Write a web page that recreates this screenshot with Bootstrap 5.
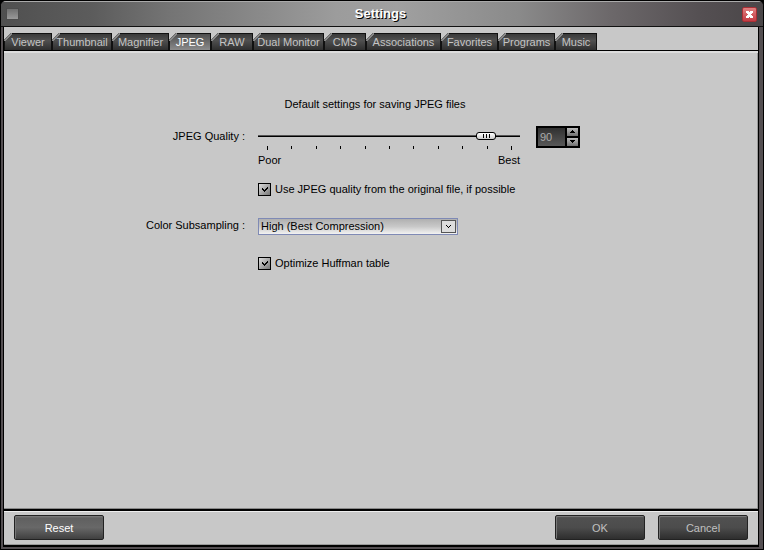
<!DOCTYPE html>
<html lang="en">
<head>
<meta charset="utf-8">
<meta name="viewport" content="width=device-width, initial-scale=1">
<title>Settings</title>
<link href="https://cdn.jsdelivr.net/npm/bootstrap@5.3.0/dist/css/bootstrap.min.css" rel="stylesheet">
<style>
body{background:#000;font:11px/14px "Liberation Sans",Arial,sans-serif;color:#000}
button,input,select{font:inherit}
.window{border:1px solid #000;border-radius:6px 6px 0 0;overflow:hidden;background:#544f52}
.titlebar{height:26px;padding:0 6px 0 5px;border-top:1px solid #aaa;border-bottom:1px solid #111;background:linear-gradient(90deg,#505050,#5c5c5c 12%,#747474 22%,#9c9c9c 44%,#a0a0a0 52%,#8a8a8a 68%,#6c686a 80%,#544f52 92%,#4a4648)}
.titlebar h1{font-size:13px;line-height:16px;font-weight:700;color:#fff;text-shadow:1px 1px 0 #000}
.sysmenu{width:13px;height:12px;border:1px solid #4d4d4d;background:linear-gradient(#707070,#999)}
.closer{width:15px;height:15px;border:1px solid #a82f35;border-radius:2px;background:linear-gradient(#e08080,#c43c44)}
.closer svg{display:block}
.inner{margin:0 4px 2px 2px;border:solid #000;border-width:0 1px 2px 1px;background:#c8c8c8}
.tabs{padding-top:6px}
.tab{height:17px;width:57px;color:#c4c4c4;background:#111;border:0;padding:0;line-height:16px;clip-path:polygon(7px 0,100% 0,100% 100%,0 100%,0 7px);position:relative;z-index:0}
.tab::before{content:"";position:absolute;z-index:-1;inset:1px 1px 0 1px;background:linear-gradient(#3a3a3a,#505050 40%,#2e2e2e);clip-path:polygon(7px 0,100% 0,100% 100%,0 100%,0 7px)}
.tab::after{content:"";position:absolute;z-index:-1;left:0;top:0;width:8px;height:8px;background:linear-gradient(135deg,transparent 46%,#888 46% 58%,transparent 58%)}
.tab.active{color:#fff}
.tab.active::before{background:linear-gradient(#4e4e4e,#8c8c8c)}
.tab-xs{width:42px}.tab-sm{width:48px}.tab-lg{width:60px}.tab-xl{width:71px}.tab-xxl{width:75px}
.panel{border:solid #000;border-width:1px 0 2px;padding-top:46px;box-shadow:inset 0 2px 0 #ddd,inset 0 -1px 0 #888,inset -1px 0 0 #999}
.caption-line{padding-right:12px}
.form-grid{display:grid;grid-template-columns:241px 322px;column-gap:13px;padding-top:15px}
.field-name{line-height:20px}
.slide{width:262px}
.slide input{appearance:none;display:block;width:100%;height:20px;margin:0;background:linear-gradient(#555 50%,#000 50%) 0 9px/100% 2px no-repeat}
.slide input::-webkit-slider-thumb{appearance:none;width:20px;height:8px;border:1px solid #000;border-radius:3px;background:linear-gradient(90deg,#000 1px,transparent 1px) 6px 1px/3px 4px no-repeat,linear-gradient(90deg,#000 1px,transparent 1px) 9px 1px/3px 4px no-repeat,linear-gradient(90deg,#000 1px,transparent 1px) 12px 1px/1px 4px no-repeat,linear-gradient(#fff,#ccc)}
.marks{padding:0 8px 0 9px;height:7px}
.marks i{width:1px;height:3px;background:#000}
.marks i:first-child,.marks i:last-child{height:4px}
.spin{width:44px;height:22px;background:#000;padding:2px;gap:2px}
.spin input{width:27px;border:0;padding:0 0 0 2px;color:#aaa;background:linear-gradient(#303030,#585858)}
.spin button{width:11px;height:8px;border:0;padding:0;background:linear-gradient(#bbb,#707070)}
.spin svg,.drop svg{display:block}
.check-row{gap:4px}
.box,.tick{width:13px;height:13px}
.tick{appearance:none;display:block;margin:0;border:1px solid #000;background:linear-gradient(135deg,#ddd,#777)}
.box svg{position:absolute;left:0;top:0;pointer-events:none}
.tick:not(:checked)+svg{display:none}
.picker{width:200px}
.picker select{appearance:none;display:block;width:100%;height:17px;border:1px solid #7f8ab5;border-radius:0;padding:0 20px 1px 2px;line-height:14px;color:#000;background:linear-gradient(#b0b0b0,#c8c8c8 50%,#f2f2f2)}
.drop{position:absolute;right:2px;top:2px;width:15px;height:13px;border:1px solid #555;background:#ddd;pointer-events:none}
.gap-check{padding-top:15px}.gap-field{padding-top:22px}.gap-last{padding-top:21px}
.footer-bar{height:34px;padding:3px 10px 0;border-top:1px solid #eee;border-bottom:1px solid #999}
.footer-bar div{gap:13px}
.push{width:90px;height:25px;border:1px solid #222;border-radius:2px;padding:0;color:#c0c0c0;background:linear-gradient(#5c5c5c,#505050 10%,#4c4c4c 50%,#2e2e2e);box-shadow:inset 1px 1px 0 #777}
.push-on{color:#fff;background:linear-gradient(#777,#606060 10%,#686868 50%,#404040)}
</style>
<script src="https://cdn.jsdelivr.net/npm/bootstrap@5.3.0/dist/js/bootstrap.bundle.min.js"></script>
</head>
<body>
<main class="window min-vh-100 d-flex flex-column">
<header class="titlebar d-flex align-items-center justify-content-between">
<button class="sysmenu p-0" aria-label="Window menu"></button>
<h1 class="m-0">Settings</h1>
<button class="closer p-0" aria-label="Close"><svg width="13" height="13" viewBox="0 0 13 13"><path d="M3 3h3v1h1V3h3v2H9v1H8v1h1v1h1v2H7V9H6v1H3V8h1V7h1V6H4V5H3z" fill="#fff"/></svg></button>
</header>
<div class="inner flex-grow-1 d-flex flex-column">
<nav class="tabs d-flex" role="tablist">
<button class="tab tab-sm" role="tab">Viewer</button>
<button class="tab tab-lg" role="tab">Thumbnail</button>
<button class="tab" role="tab">Magnifier</button>
<button class="tab tab-xs active" role="tab" aria-selected="true">JPEG</button>
<button class="tab tab-xs" role="tab">RAW</button>
<button class="tab tab-xl text-nowrap" role="tab">Dual Monitor</button>
<button class="tab tab-xs" role="tab">CMS</button>
<button class="tab tab-xxl" role="tab">Associations</button>
<button class="tab" role="tab">Favorites</button>
<button class="tab" role="tab">Programs</button>
<button class="tab tab-xs" role="tab">Music</button>
</nav>
<section class="panel flex-grow-1">
<div class="caption-line text-center">Default settings for saving JPEG files</div>
<div class="form-grid">
<label class="field-name text-end" for="quality">JPEG Quality :</label>
<div class="d-flex justify-content-between align-items-start">
<div class="slide">
<input type="range" id="quality" min="0" max="100" value="90">
<div class="marks d-flex justify-content-between"><i></i><i></i><i></i><i></i><i></i><i></i><i></i><i></i><i></i><i></i><i></i></div>
<div class="d-flex justify-content-between"><span>Poor</span><span>Best</span></div>
</div>
<div class="spin d-flex">
<input type="text" value="90" aria-label="Quality value">
<div class="d-flex flex-column justify-content-between">
<button aria-label="Increase"><svg width="11" height="8" viewBox="0 0 11 8"><path d="M5 2h1v1h1v1h1v1H3V4h1V3h1z"/></svg></button>
<button aria-label="Decrease"><svg width="11" height="8" viewBox="0 0 11 8"><path d="M3 2h5v1H7v1H6v1H5V4H4V3H3z"/></svg></button>
</div>
</div>
</div>
<span></span>
<div class="gap-check check-row d-flex align-items-center">
<span class="box position-relative"><input class="tick" type="checkbox" id="original" checked><svg width="13" height="13" viewBox="0 0 13 13"><path d="M4 5h1v1h1v1h1V6h1V5h1V4h1v2H9v1H8v1H7v1H6V8H5V7H4z"/></svg></span>
<label for="original">Use JPEG quality from the original file, if possible</label>
</div>
<label class="gap-field text-end" for="subsampling">Color Subsampling :</label>
<div class="gap-field">
<div class="picker position-relative">
<select id="subsampling"><option>High (Best Compression)</option></select>
<span class="drop"><svg width="13" height="11" viewBox="0 0 13 11"><path d="M4 4h1v1h1v1h1V5h1V4h1v1H8v1H7v1H6V6H5V5H4z"/></svg></span>
</div>
</div>
<span></span>
<div class="gap-last check-row d-flex align-items-center">
<span class="box position-relative"><input class="tick" type="checkbox" id="huffman" checked><svg width="13" height="13" viewBox="0 0 13 13"><path d="M4 5h1v1h1v1h1V6h1V5h1V4h1v2H9v1H8v1H7v1H6V8H5V7H4z"/></svg></span>
<label for="huffman">Optimize Huffman table</label>
</div>
</div>
</section>
<footer class="footer-bar d-flex justify-content-between">
<button class="push push-on">Reset</button>
<div class="d-flex"><button class="push">OK</button><button class="push">Cancel</button></div>
</footer>
</div>
</main>
</body>
</html>
